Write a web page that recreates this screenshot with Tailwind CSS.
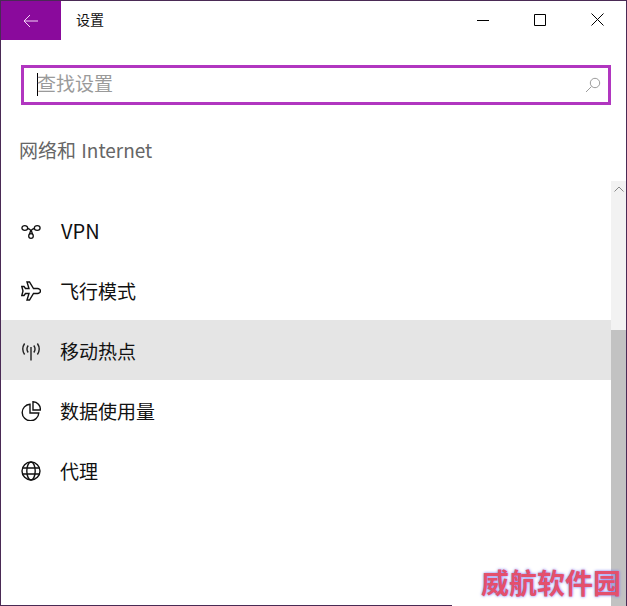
<!DOCTYPE html>
<html lang="zh">
<head>
<meta charset="utf-8">
<title>设置</title>
<script src="https://cdn.jsdelivr.net/npm/@tailwindcss/browser@4"></script>
</head>
<body class="bg-white">
<div class="relative flex h-[606px] w-[627px] flex-col overflow-hidden border border-b-0 border-[#4a2a55] bg-white font-['Noto_Sans_CJK_SC','Noto_Sans',sans-serif] text-[#111]">
  <header class="flex h-[39px] shrink-0 items-center">
    <div class="flex h-[39px] w-[60px] items-center justify-center bg-[#8a0a9c]">
      <svg width="16" height="14" viewBox="0 0 16 14" fill="none" stroke="#f4d7f7" stroke-width="1"><path d="M15 7H1M7 1 1 7l6 6"/></svg>
    </div>
    <span class="mb-[2px] ml-[15px] text-[14px]">设置</span>
    <div class="mb-[2px] ml-auto flex items-center">
      <svg width="12" height="12" viewBox="0 0 12 12" class="mr-[45px]" fill="none" stroke="#000"><path d="M0 6.500h12"/></svg>
      <svg width="12" height="12" viewBox="0 0 12 12" class="mr-[45px]" fill="none" stroke="#000"><path d="M.5.5h11v11H.5z"/></svg>
      <svg width="13" height="13" viewBox="0 0 13 13" class="mr-[22px]" fill="none" stroke="#000"><path d="m.5.5 12 12M12.500.5l-12 12"/></svg>
    </div>
  </header>
  <div class="mx-5 mt-[25px] flex h-10 w-[590px] shrink-0 items-center border-[3px] border-[#b136c0] pl-[13px] pr-[7px]">
    <span class="mb-px h-[23px] w-px bg-black"></span>
    <span class="mb-[5px] -ml-px text-[19px] leading-none text-[#9a9a9a]">查找设置</span>
    <svg width="16" height="16" viewBox="0 0 16 16" class="ml-auto" fill="none" stroke="#9c9c9c"><circle cx="10" cy="6" r="4.700"/><path d="M6.500 9.500 1 15"/></svg>
  </div>
  <div class="ml-[18px] mt-[32px] text-[19px] leading-[26px] text-[#666] [word-spacing:1px]">网络和 Internet</div>
  <div class="relative mt-[18px] flex-1">
    <ul class="w-[610px] pt-[19px] text-[19px]">
      <li class="flex h-[60px] items-center pl-[20px]">
        <svg width="20" height="20" viewBox="0 0 20 20" class="mt-[2px]" fill="none" stroke="#111" stroke-width="1.300"><ellipse cx="3.800" cy="7" rx="2.900" ry="2.300"/><ellipse cx="16.200" cy="7" rx="2.900" ry="2.300"/><circle cx="10" cy="15" r="2.300"/><path d="M6.600 7.500c2.300.4 4.200 2.500 5 5.800M13.400 7.500c-2.300.4-4.200 2.500-5 5.800"/></svg>
        <span class="ml-[20px] pt-[2px] text-[20px]">VPN</span>
      </li>
      <li class="flex h-[60px] items-center pl-[20px]">
        <svg width="20" height="20" viewBox="0 0 20 20" class="mt-[2px]" fill="none" stroke="#111" stroke-width="1.400"><path d="M6 1h2.500l4 6.500h4c1.500 0 3 1.200 3 2.500s-1.500 2.500-3 2.500h-4l-4 6.500H6l2-6.500H4.500L3 14.500H.8L2 10 .8 5.500H3l1.500 2H8z"/></svg>
        <span class="ml-[19px] pt-[2px]">飞行模式</span>
      </li>
      <li class="flex h-[60px] items-center bg-[#e5e5e5] pl-[20px]">
        <svg width="20" height="20" viewBox="0 0 20 20" class="mt-[2px]" fill="none" stroke="#222" stroke-width="1.400"><path d="M10 6v13.500M7.200 4.500c-1.400 2-1.400 5 0 7M12.800 4.500c1.400 2 1.400 5 0 7M3.600 2.500c-2.200 3.300-2.200 7.700 0 11M16.400 2.500c2.200 3.300 2.200 7.700 0 11"/></svg>
        <span class="ml-[19px] pt-[2px]">移动热点</span>
      </li>
      <li class="flex h-[60px] items-center pl-[20px]">
        <svg width="20" height="20" viewBox="0 0 20 20" class="mt-[2px]" fill="none" stroke="#111" stroke-width="1.400"><path d="M9 3.200a8.300 8.300 0 1 0 8.800 8.800H9z"/><path d="M12 .8a7.400 7.400 0 0 1 7.300 8.200H12z"/></svg>
        <span class="ml-[19px] pt-[2px]">数据使用量</span>
      </li>
      <li class="flex h-[60px] items-center pl-[20px]">
        <svg width="20" height="20" viewBox="0 0 20 20" class="mt-[2px]" fill="none" stroke="#111" stroke-width="1.400"><circle cx="10" cy="10" r="9"/><ellipse cx="10" cy="10" rx="4.200" ry="9"/><path d="M1.500 7h17M1.500 13h17"/></svg>
        <span class="ml-[19px] pt-[2px]">代理</span>
      </li>
    </ul>
    <div class="absolute bottom-0 right-0 top-0 flex w-[15px] flex-col bg-[#f2f2f2]">
      <div class="flex h-[16px] items-center justify-center">
        <svg width="10" height="6" viewBox="0 0 10 6" fill="none" stroke="#888"><path d="m.5 5.500 4.500-4.500 4.500 4.500"/></svg>
      </div>
      <div class="mt-[133px] flex-1 bg-[#c2c2c2]"></div>
    </div>
  </div>
  <div class="absolute bottom-0 left-0 h-px w-[451px] bg-[#4a2a55]"></div>
  <div class="absolute bottom-[5px] right-[5px] text-[28px] font-bold leading-[38px] text-[#e4506c] [text-shadow:0_0_3px_#7072f0]">威航软件园</div>
</div>
</body>
</html>
